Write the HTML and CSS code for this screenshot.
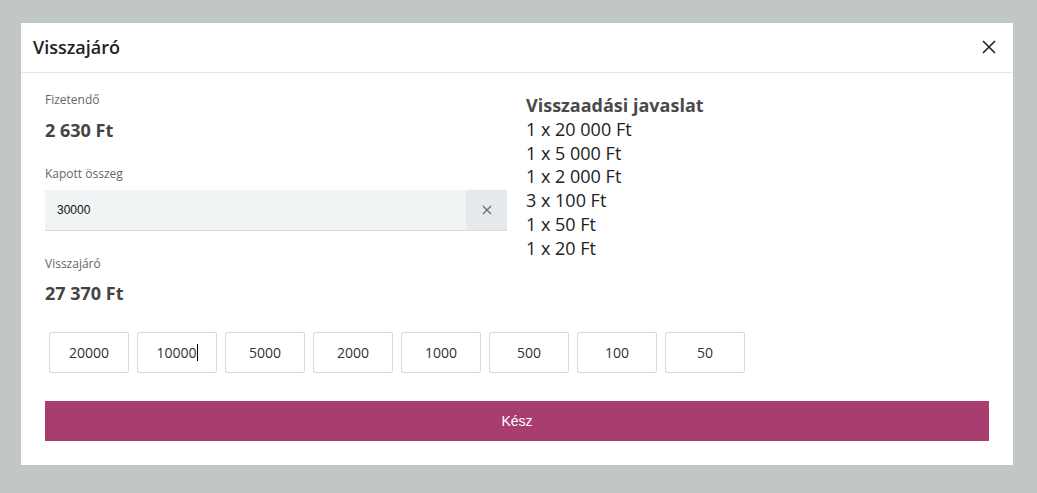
FILE: index.html
```html
<!DOCTYPE html>
<html lang="hu">
<head>
<meta charset="utf-8">
<link rel="stylesheet" href="styles.css">
</head>
<body>
<div class="backdrop">
  <div class="modal">
    <div class="modal-header">
      <h1 class="modal-title">Visszajáró</h1>
      <button class="close-btn" aria-label="Bezár">
        <svg width="14" height="14" viewBox="0 0 14 14"><path d="M1 1L13 13M13 1L1 13" stroke="#222" stroke-width="1.6" fill="none"/></svg>
      </button>
    </div>
    <div class="modal-body">
      <div class="columns">
        <div class="left">
          <div class="field-label">Fizetendő</div>
          <div class="field-value">2 630 Ft</div>
          <div class="field-label second">Kapott összeg</div>
          <div class="input-row">
            <div class="input-text">30000</div>
            <div class="input-clear">
              <svg width="10" height="10" viewBox="0 0 10 10"><path d="M1 1L9 9M9 1L1 9" stroke="#666" stroke-width="1.1" fill="none"/></svg>
            </div>
          </div>
          <div class="field-label third">Visszajáró</div>
          <div class="field-value last">27 370 Ft</div>
        </div>
        <div class="right">
          <div class="suggest-title">Visszaadási javaslat</div>
          <div class="suggest-line">1 x 20 000 Ft</div>
          <div class="suggest-line">1 x 5 000 Ft</div>
          <div class="suggest-line">1 x 2 000 Ft</div>
          <div class="suggest-line">3 x 100 Ft</div>
          <div class="suggest-line">1 x 50 Ft</div>
          <div class="suggest-line">1 x 20 Ft</div>
        </div>
      </div>
      <div class="denoms">
        <div class="denom">20000</div>
        <div class="denom">10000<span class="caret"></span></div>
        <div class="denom">5000</div>
        <div class="denom">2000</div>
        <div class="denom">1000</div>
        <div class="denom">500</div>
        <div class="denom">100</div>
        <div class="denom">50</div>
      </div>
      <button class="done-btn">Kész</button>
    </div>
  </div>
</div>
</body>
</html>
```
FILE: styles.css
```css
* { box-sizing: border-box; }
html, body { margin: 0; padding: 0; }
body {
  width: 1037px;
  height: 493px;
  background: #c1c6c6;
  font-family: "Open Sans", "Noto Sans", sans-serif;
  overflow: hidden;
}
.backdrop {
  padding: 23px 24px 0 21px;
}
.modal {
  width: 992px;
  height: 442px;
  background: #fff;
}
.modal-header {
  height: 50px;
  border-bottom: 1px solid #e4e8e8;
  display: flex;
  align-items: center;
  justify-content: space-between;
  padding: 0 17px 0 12px;
}
.modal-title {
  margin: 0;
  font-size: 18px;
  font-weight: 600;
  color: #222;
  padding-bottom: 1px;
}
.close-btn {
  border: 0;
  background: none;
  padding: 0;
  width: 14px;
  height: 14px;
  display: flex;
  margin-bottom: 1px;
}
.modal-body {
  padding: 19px 24px 0 24px;
}
.columns {
  display: grid;
  grid-template-columns: 462px 1fr;
  column-gap: 19px;
}
.field-label {
  font-size: 12px;
  color: #666;
  line-height: 16px;
}
.field-label.second { margin-top: 24px; }
.field-label.third { margin-top: 25px; }
.field-value {
  font-size: 18px;
  font-weight: 700;
  color: #444;
  line-height: 24px;
  margin-top: 10px;
}
.field-value.last { margin-top: 9px; }
.input-row {
  margin-top: 8px;
  height: 41px;
  display: flex;
  background: #f1f4f5;
  border-bottom: 1px solid #d8dcdc;
}
.input-text {
  flex: 1;
  padding-left: 12px;
  display: flex;
  align-items: center;
  font-family: "Liberation Sans", Arial, sans-serif;
  font-size: 12px;
  color: #111;
}
.input-clear {
  width: 41px;
  background: #e6e9eb;
  display: flex;
  align-items: center;
  justify-content: center;
}
.right {
  color: #222;
  padding-top: 2px;
}
.suggest-title {
  font-size: 18px;
  font-weight: 700;
  color: #4a4a4a;
  line-height: 23.8px;
}
.suggest-line {
  font-size: 18px;
  line-height: 23.8px;
  color: #222;
}
.denoms {
  display: flex;
  gap: 8px;
  margin-top: 27px;
  padding-left: 4px;
}
.denom {
  width: 80px;
  height: 41px;
  border: 1px solid #d9d9d9;
  border-radius: 2px;
  display: flex;
  align-items: center;
  justify-content: center;
  font-size: 14px;
  color: #333;
}
.caret {
  display: inline-block;
  width: 1px;
  height: 17px;
  background: #000;
}
.done-btn {
  display: block;
  width: 944px;
  height: 40px;
  margin-top: 28px;
  border: 0;
  background: #a83e6f;
  color: #fff;
  font-family: "Liberation Sans", Arial, sans-serif;
  font-size: 14px;
  padding: 0;
}
```
